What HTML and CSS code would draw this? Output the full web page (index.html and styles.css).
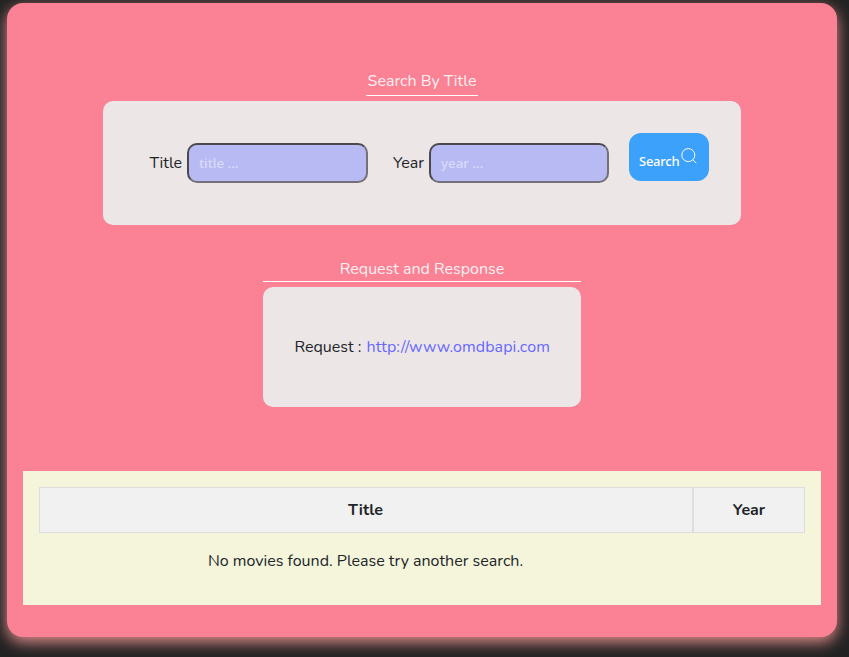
FILE: index.html
```html
<!DOCTYPE html>
<html lang="en">
<head>
<meta charset="utf-8">
<title>Movie search</title>
<link rel="stylesheet" href="styles.css">
</head>
<body>
<main class="panel">
  <h2 class="heading"><span>Search By Title</span></h2>
  <form class="card search">
    <label class="field"><span class="label-title">Title</span><input type="text" placeholder="title ..."></label>
    <label class="field field-year"><span class="label-year">Year</span><input type="text" placeholder="year ..."></label>
    <button class="button" type="button"><span>Search</span><svg class="icon" viewBox="0 0 16 16" fill="none" stroke="currentColor" stroke-width="1"><circle cx="7.3" cy="7.1" r="6.5"/><path d="M11.8 11.7 15.3 15.2"/></svg></button>
  </form>
  <h2 class="heading heading-wide"><span>Request and Response</span></h2>
  <section class="card request">
    <p><span class="request-label">Request :</span><a class="request-url">http://www.omdbapi.com</a></p>
  </section>
  <section class="results">
    <div class="row">
      <div class="cell cell-title">Title</div>
      <div class="cell cell-year">Year</div>
    </div>
    <p class="empty">No movies found. Please try another search.</p>
  </section>
</main>
</body>
</html>
```
FILE: styles.css
```css
* { box-sizing: border-box; }
html { overflow: hidden; }
body {
  margin: 0;
  padding: 3px 12px 20px 7px;
  background: #222;
  color: #212529;
  font: 16px/24px Nunito, Lato, sans-serif;
}
.panel {
  display: flex;
  flex-direction: column;
  align-items: center;
  height: 634px;
  padding: 66px 16px 0;
  border-radius: 16px;
  background: #fb8194;
  box-shadow: 0 5px 15px #e58d8d;
}
.heading {
  display: flex;
  justify-content: center;
  width: 112px;
  height: 27px;
  margin: 0 0 5px;
  border-bottom: 1px solid #fff;
  color: #fff0f2;
  font-size: 16px;
  font-weight: 400;
  white-space: nowrap;
}
.heading-wide { width: 318px; height: 25px; margin-top: 32px; }
.card { border-radius: 10px; background: #ece6e6; }
.search {
  display: flex;
  align-items: flex-start;
  width: 638px;
  height: 124px;
  padding: 32px 32px 0 46.5px;
}
.field { display: flex; align-items: center; height: 40px; margin-top: 10px; }
.label-title { width: 37.5px; }
.label-year { width: 36px; }
.field-year { margin-left: 25px; }
.field input {
  width: 181px;
  height: 40px;
  padding: 0 9px 1px 10px;
  border: 2px solid;
  border-color: #4b494b #737078 #737078 #4b494b;
  border-radius: 10px;
  background: #b8baf3;
  font: 500 13.33px "Noto Sans", sans-serif;
}
.field-year input { width: 180px; }
.field input::placeholder { color: #d9dafa; opacity: 1; }
.button {
  display: flex;
  width: 80px;
  height: 48px;
  margin-left: 20px;
  padding: 15px 0 0 10px;
  border: 0;
  border-radius: 12px;
  background: #3ba1fa;
  color: #fff;
  font: 500 13px/27px "Noto Sans", sans-serif;
}
.button span { width: 42px; text-align: left; letter-spacing: -.25px; }
.icon { width: 16px; height: 16px; }
.request { width: 318px; height: 120px; padding: 48px 30px 0 31.5px; }
.request p { display: flex; margin: 0; white-space: nowrap; }
.request-label { width: 72px; }
.request-url { color: #6868ff; letter-spacing: .1px; font-variant-ligatures: common-ligatures; }
.results {
  align-self: stretch;
  height: 134px;
  margin-top: 64px;
  padding: 16px;
  background: #f5f5dc;
}
.row { display: flex; height: 46px; }
.cell {
  border: 1px solid #ddd;
  background: #f1f1f1;
  font-weight: 700;
  line-height: 44px;
  text-align: center;
}
.cell-title { width: 654px; padding-right: 1px; }
.cell-year { width: 112px; }
.empty { width: 653px; margin: 16px 0 0; text-align: center; }
```
